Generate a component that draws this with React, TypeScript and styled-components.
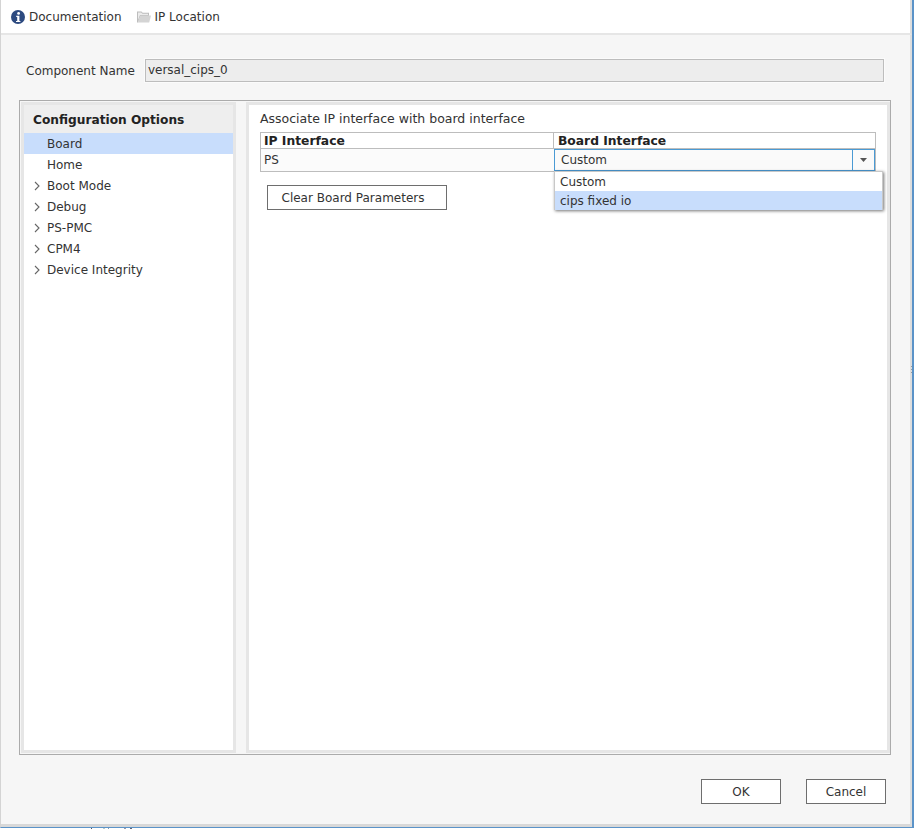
import React from "react";
import styled, { createGlobalStyle } from "styled-components";

const Global = createGlobalStyle`
  html, body { margin: 0; padding: 0; background: #fff; }
  body { font-family: "DejaVu Sans", sans-serif; font-size: 12px; color: #222; }
`;

const Window = styled.div`
  width: 914px; height: 829px; box-sizing: border-box; overflow: hidden;
  display: flex; flex-direction: column; position: relative;
`;
const Frame = styled.div`
  width: 914px; height: 828px; flex: none; box-sizing: border-box; display: flex; flex-direction: column;
  border-left: 1px solid #d4d4d4; border-right: 2px solid #5b93c8; border-bottom: 1px solid #5b93c8;
  background: #f6f6f6;
`;
const Toolbar = styled.div`
  height: 33px; background: #fff; border-bottom: 2px solid #e6e6e6; border-right: 2px solid #dedede; display: flex; align-items: center;
  padding-left: 10px; gap: 15px; flex: none;
`;
const ToolItem = styled.div`
  display: flex; align-items: center; gap: 4px; color: #333; line-height: 14px;
`;
const Content = styled.div`
  flex: 1; min-height: 0; display: flex; flex-direction: column; padding: 24px 19px 0 18px;
  border-bottom: 3px solid #d8d8d8; border-right: 2px solid #dedede;
`;
const NameRow = styled.div`
  display: flex; align-items: center; height: 23px; padding: 0 7px; gap: 10px; margin-bottom: 18px;
`;
const NameLabel = styled.span`color: #333;`;
const NameInput = styled.div`
  flex: 1; height: 23px; box-sizing: border-box; background: #ededed; border: 1px solid #bdbdbd;
  padding-left: 2px; line-height: 21px; color: #333; box-shadow: 0 0 0 1px #fbfbfb;
`;
const Outer = styled.div`
  height: 655px; box-sizing: border-box; border: 1px solid #ababab; padding: 1px; display: flex; flex: none;
  background: #f6f6f6;
`;
const SidePane = styled.div`
  width: 215px; flex: none; box-sizing: border-box; background: #fff; border: 3px solid #e6e6e6; display: flex; flex-direction: column;
`;
const SideHeader = styled.div`
  height: 28px; background: #eeeeee; font-weight: bold; font-size: 12.2px; color: #222; display: flex; align-items: center; padding: 1px 0 0 9px; box-sizing: border-box;
`;
const SideRow = styled.div<{ $sel?: boolean }>`
  height: 21px; display: flex; align-items: center; position: relative; padding-left: 23px; color: #333;
  background: ${(p) => (p.$sel ? "#c8ddfc" : "transparent")};
`;
const Chev = styled.svg`
  position: absolute; left: 10px; top: 6px; width: 6px; height: 10px;
`;
const MainPane = styled.div`
  margin-left: 10px; flex: 1; box-sizing: border-box; background: #fff; border: 3px solid #e6e6e6;
  padding: 7px 11px 0 11px; display: flex; flex-direction: column; margin-right: -1px;
`;
const Caption = styled.div`height: 16px; line-height: 14px; color: #333; font-size: 12.5px;`;
const Table = styled.div`
  margin-top: 4px; border: 1px solid #bdbdbd; display: flex; flex-direction: column; position: relative; width: 616px; box-sizing: border-box; flex: none;
`;
const HeadRow = styled.div`
  display: grid; grid-template-columns: 292px 1fr; height: 16px; box-sizing: border-box; border-bottom: 1px solid #bdbdbd;
`;
const HeadCell = styled.div<{ $div?: boolean }>`
  font-weight: bold; font-size: 12.3px; color: #222; padding-left: ${(p) => (p.$div ? "4px" : "3px")}; line-height: 17px;
  border-left: ${(p) => (p.$div ? "1px solid #bdbdbd" : "none")};
`;
const BodyRow = styled.div`
  display: grid; grid-template-columns: 293px 1fr; height: 22px; background: #fbfbfb;
`;
const BodyCell = styled.div`padding-left: 3px; line-height: 23px; color: #333;`;
const Combo = styled.div`
  box-sizing: border-box; height: 22px; width: 321px; border: 1px solid #4a9ad4; display: flex; background: #fafafa;
`;
const ComboText = styled.div`flex: 1; padding-left: 6px; line-height: 20px; color: #333;`;
const ComboBtn = styled.div`
  width: 21px; border-left: 1px solid #4a9ad4; display: flex; align-items: center; justify-content: center;
`;
const Menu = styled.div`
  position: absolute; left: 293px; top: 38px; width: 329px; height: 39px; background: #fff; box-sizing: border-box;
  border: 1px solid #c8c8c8; box-shadow: 1px 1px 3px rgba(0,0,0,.55); z-index: 2; display: flex; flex-direction: column;
`;
const MenuItem = styled.div<{ $sel?: boolean }>`
  height: 19px; padding-left: 5px; line-height: 21px; color: #333;
  background: ${(p) => (p.$sel ? "#c8ddfc" : "#fff")};
`;
const ClearButton = styled.div`
  margin: 13px 0 0 7px; width: 180px; height: 25px; box-sizing: border-box; border: 1px solid #6e6e6e; background: #fff; padding-right: 8px;
  display: flex; align-items: center; justify-content: center; color: #333; flex: none;
`;
const Footer = styled.div`
  display: flex; justify-content: flex-end; gap: 25px; padding: 24px 5px 0 0;
`;
const FootButton = styled.div`
  width: 80px; height: 25px; box-sizing: border-box; border: 1px solid #6e6e6e; background: #fff; display: flex; align-items: center; justify-content: center; color: #333;
`;
const Grip = styled.div`
  position: absolute; left: 911px; top: 366px; width: 1px; height: 8px;
  background: repeating-linear-gradient(#999 0 1px, transparent 1px 3px);
`;
const BackdropMarks = styled.svg`
  position: absolute; left: 0; top: 828px; width: 200px; height: 1px;
`;

const Chevron = () => (
  <Chev viewBox="0 0 6 10"><path d="M1 1 L5 5 L1 9" fill="none" stroke="#666" strokeWidth="1.1" /></Chev>
);

const items = ["Boot Mode", "Debug", "PS-PMC", "CPM4", "Device Integrity"];

export default function App() {
  return (
    <Window>
      <Global />
      <Frame>
        <Toolbar>
          <ToolItem>
            <svg width="14" height="14" viewBox="0 0 14 14">
              <circle cx="7" cy="7" r="7" fill="#2d4a80" />
              <circle cx="7.6" cy="3.4" r="1.4" fill="#fff" />
              <path d="M5.2 5.8h3.2v5.2h1v1H5v-1h1.2V6.9H5.2z" fill="#fff" />
            </svg>
            Documentation
          </ToolItem>
          <ToolItem>
            <svg width="14" height="14" viewBox="0 0 14 14">
              <path d="M0 1.5h4.5l1.2 1.3H12V6H3.5L1 12.5H0z" fill="#bdbdbd" />
              <path d="M1 2.5h3.2l1.2 1.3H11V5H3L1 10z" fill="#ececec" />
              <path d="M3.4 5.6H14l-1.8 7H.8z" fill="#d4d4d4" />
            </svg>
            IP Location
          </ToolItem>
        </Toolbar>
        <Content>
          <NameRow>
            <NameLabel>Component Name</NameLabel>
            <NameInput>versal_cips_0</NameInput>
          </NameRow>
          <Outer>
            <SidePane>
              <SideHeader>Configuration Options</SideHeader>
              <SideRow $sel>Board</SideRow>
              <SideRow>Home</SideRow>
              {items.map((t) => (
                <SideRow key={t}><Chevron />{t}</SideRow>
              ))}
            </SidePane>
            <MainPane>
              <Caption>Associate IP interface with board interface</Caption>
              <Table>
                <HeadRow>
                  <HeadCell>IP Interface</HeadCell>
                  <HeadCell $div>Board Interface</HeadCell>
                </HeadRow>
                <BodyRow>
                  <BodyCell>PS</BodyCell>
                  <Combo>
                    <ComboText>Custom</ComboText>
                    <ComboBtn>
                      <svg width="7" height="4" viewBox="0 0 7 4"><path d="M0 0h7L3.5 4z" fill="#555" /></svg>
                    </ComboBtn>
                  </Combo>
                </BodyRow>
                <Menu>
                  <MenuItem>Custom</MenuItem>
                  <MenuItem $sel>cips fixed io</MenuItem>
                </Menu>
              </Table>
              <ClearButton>Clear Board Parameters</ClearButton>
            </MainPane>
          </Outer>
          <Footer>
            <FootButton>OK</FootButton>
            <FootButton>Cancel</FootButton>
          </Footer>
        </Content>
      </Frame>
      <Grip />
      <BackdropMarks viewBox="0 0 200 1">
        <rect x="91" width="1" height="1" fill="#556" />
        <rect x="103" width="2" height="1" fill="#bcc" />
        <rect x="108" width="1" height="1" fill="#89a" />
        <rect x="124" width="2" height="1" fill="#99a" />
        <rect x="130" width="2" height="1" fill="#667" />
      </BackdropMarks>
    </Window>
  );
}
